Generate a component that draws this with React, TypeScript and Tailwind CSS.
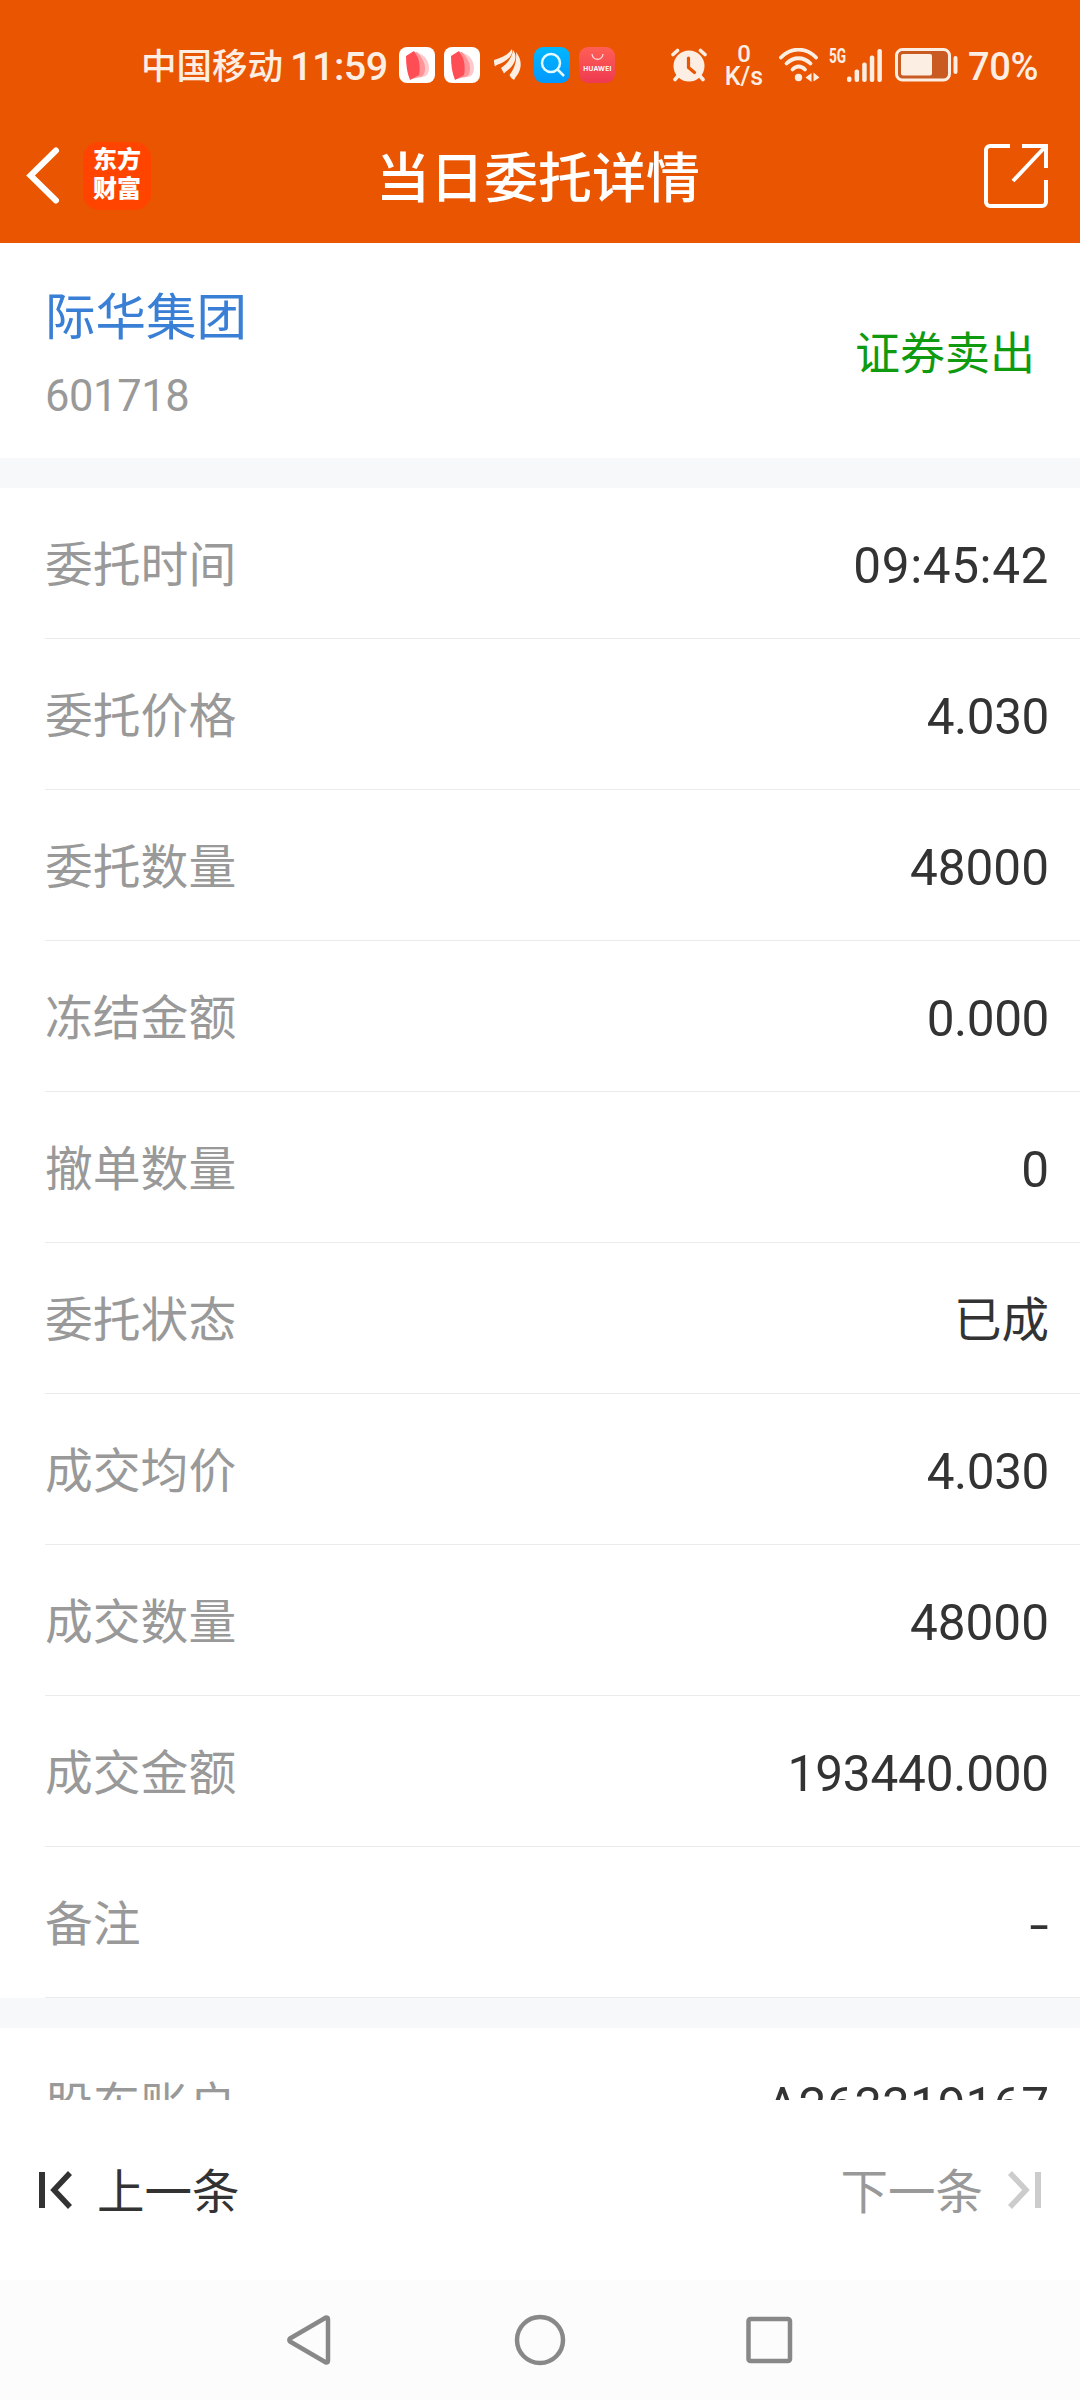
import React from 'react';

const rows = [
  { label: '委托时间', value: '09:45:42', valueClass: 'text-[49.500px] tracking-[.6px]' },
  { label: '委托价格', value: '4.030', valueClass: 'text-[49.500px] tracking-[-.4px]' },
  { label: '委托数量', value: '48000', valueClass: 'text-[49.500px]' },
  { label: '冻结金额', value: '0.000', valueClass: 'text-[49.500px] tracking-[-.4px]' },
  { label: '撤单数量', value: '0', valueClass: 'text-[49.500px]' },
  { label: '委托状态', value: '已成', valueClass: 'text-[47.500px]' },
  { label: '成交均价', value: '4.030', valueClass: 'text-[49.500px] tracking-[-.4px]' },
  { label: '成交数量', value: '48000', valueClass: 'text-[49.500px]' },
  { label: '成交金额', value: '193440.000', valueClass: 'text-[49.500px] tracking-[-.2px]' },
  { label: '备注', value: '-', valueClass: 'origin-right scale-x-140 text-[49.500px]' },
];

function ReaderIcon() {
  return (
    <svg width="36" height="36" viewBox="0 0 36 36">
      <rect width="36" height="36" rx="8" fill="#fff" />
      <path d="M14 6l5 0c7 2 11 8 11 15 0 6-3 9-7 9l-10 2z" fill="#ffc9cc" />
      <path d="M12 6l6-1c5 5 8 11 8 16 0 6-2 9-6 9l-8 2z" fill="#ff9499" />
      <path d="M7 9l8-5 4 7c2 6 2 13 1 17l-9 5c-3-7-4-15-4-24z" fill="#ff4d55" />
    </svg>
  );
}

function FeatherIcon() {
  return (
    <svg width="27" height="32" viewBox="0 0 27 32" fill="#fdeee4">
      <path d="M0 11C7 9 14 6 18 0c1 5-2 9-7 12-4 3-8 3-10 5.500C0 15 0 13 0 11z" />
      <path d="M7 19c6-4 11-10 12-18 4 5 3 11-1 16-3 4-6 5-8 7.500-1-2-2-3.500-3-5.500z" />
      <path d="M15.500 26C20 20 23 13 22 3c5 6 6 13 3 20-1 3-4 5-5 8-2-1-3.500-3-4.500-5z" />
    </svg>
  );
}

function SearchIcon() {
  return (
    <svg width="36" height="36" viewBox="0 0 36 36" fill="none">
      <defs>
        <linearGradient id="search" x1="0" y1="0" x2="0" y2="1">
          <stop stopColor="#00b7ff" />
          <stop offset="1" stopColor="#0098ff" />
        </linearGradient>
      </defs>
      <rect width="36" height="36" rx="9" fill="url(#search)" />
      <circle cx="17" cy="16" r="9" stroke="#e6fbff" strokeWidth="2.500" />
      <path d="M23 22l7 7" stroke="#e6fbff" strokeWidth="2.500" />
    </svg>
  );
}

function HuaweiIcon() {
  return (
    <svg width="36" height="36" viewBox="0 0 36 36" fill="none">
      <defs>
        <linearGradient id="huawei" x1="0" y1="0" x2="0" y2="1">
          <stop stopColor="#ff5f57" />
          <stop offset="1" stopColor="#ee3a50" />
        </linearGradient>
      </defs>
      <rect width="36" height="36" rx="9" fill="url(#huawei)" />
      <path d="M13 7c1 7 10 7 11 0" stroke="#ffd6d4" strokeWidth="1.300" />
      <text x="18.300" y="23.500" textAnchor="middle" textLength="28" fontSize="6.600" fontWeight="700" fill="#fff" fontFamily="Inter, sans-serif">HUAWEI</text>
    </svg>
  );
}

function AlarmIcon() {
  return (
    <svg width="36" height="34" viewBox="0 0 36 34" fill="none" stroke="#fdeee4" strokeLinecap="round">
      <circle cx="18" cy="18" r="15.500" fill="#fdeee4" stroke="none" />
      <path d="M2 6.500l4.500-4M34 6.500l-4.500-4" strokeWidth="3.600" />
      <path d="M7 28l-3 3.500M29 28l3 3.500" strokeWidth="3.600" />
      <path d="M17.500 10v9.500l6 5" stroke="#e95500" strokeWidth="3.200" strokeLinejoin="round" />
    </svg>
  );
}

function WifiIcon() {
  return (
    <svg width="41" height="34" viewBox="0 0 41 34" fill="none" stroke="#fdeee4" strokeWidth="3.800" strokeLinecap="round">
      <path d="M2 9.500C12-1 27-1 37 9.500" />
      <path d="M7.500 15.500c7-7 17-7 24 0" />
      <path d="M13.500 21.500c4-4 8.500-4 12.500 0" />
      <circle cx="19.500" cy="29.500" r="3.700" fill="#fdeee4" stroke="none" />
      <path d="M26.500 29.500l6-4.500v9zM40.500 29.500l-6-5v9z" fill="#fdeee4" stroke="none" />
    </svg>
  );
}

function SignalIcon() {
  return (
    <svg width="35" height="33" viewBox="0 0 35 33" fill="#fdeee4">
      <rect x="0" y="27.500" width="4.500" height="5.500" rx="2" />
      <rect x="7.600" y="20.500" width="4.500" height="12.500" rx="2" />
      <rect x="15.200" y="13.500" width="4.500" height="19.500" rx="2" />
      <rect x="22.800" y="6.500" width="4.500" height="26.500" rx="2" />
      <rect x="30.400" y="0" width="4.500" height="33" rx="2" />
    </svg>
  );
}

function BatteryIcon() {
  return (
    <svg width="64" height="34" viewBox="0 0 64 34" fill="none">
      <rect x="1.500" y="1.500" width="53" height="30.500" rx="6" fill="#c85a22" stroke="#fdeee4" strokeWidth="3" />
      <rect x="6" y="6" width="31" height="21.500" rx="2" fill="#fdeee4" />
      <rect x="58.500" y="8" width="4" height="18" rx="2" fill="#fdeee4" />
    </svg>
  );
}

function StatusBar() {
  return (
    <div className="flex h-[130px] items-center text-[#fdeee4] font-medium whitespace-nowrap">
      <span className="ml-[141px] w-[149px] pt-[6px] text-[35.500px]">中国移动</span>
      <span className="w-[109px] pt-[4px] text-[39.500px] tracking-[-.5px]">11:59</span>
      <div className="flex items-center">
        <ReaderIcon />
        <div className="ml-[9px]"><ReaderIcon /></div>
        <div className="ml-[14px]"><FeatherIcon /></div>
        <div className="ml-[13px]"><SearchIcon /></div>
        <div className="ml-[9px]"><HuaweiIcon /></div>
      </div>
      <div className="ml-[56px]"><AlarmIcon /></div>
      <div className="ml-[17px] flex w-[40px] flex-col items-center">
        <span className="text-[24px] leading-[23px]">0</span>
        <span className="text-[25px] leading-[22px]">K/s</span>
      </div>
      <div className="ml-[15px]"><WifiIcon /></div>
      <span className="ml-[9px] w-[18px] origin-left scale-x-[.65] self-start pt-[44px] text-[21px] leading-[24px] font-bold">5G</span>
      <SignalIcon />
      <div className="ml-[13px]"><BatteryIcon /></div>
      <span className="ml-[9px] pt-[5px] text-[38px] tracking-[-.4px]">70%</span>
    </div>
  );
}

function TitleBar() {
  return (
    <div className="flex h-[113px] items-start justify-between pt-[2px] pr-[31px] pl-[25px]">
      <div className="flex w-[160px] items-center pt-[10px]">
        <svg width="36" height="60" viewBox="0 0 36 60" fill="none" className="mb-[3px]">
          <path d="M31 5.500L5.500 30.500l25.500 25" stroke="#fff" strokeWidth="6" strokeLinecap="round" />
        </svg>
        <div className="ml-[22px] flex h-[68px] w-[68px] flex-col items-center justify-center rounded-[16px] bg-[#ff4400] pb-[2px] text-[24px] leading-[29px] font-black text-white">
          <span>东方</span>
          <span>财富</span>
        </div>
      </div>
      <h1 className="pt-[12px] pl-[2px] text-[54px] leading-[72px] font-medium text-white">当日委托详情</h1>
      <div className="flex w-[160px] justify-end pt-[11px]">
        <svg width="66" height="66" viewBox="0 0 66 66" fill="none" stroke="#fff" strokeWidth="4">
          <path d="M27 3H7a4 4 0 0 0-4 4v52a4 4 0 0 0 4 4h52a4 4 0 0 0 4-4V37" />
          <path d="M39 3h24v22" />
          <path d="M30 38L62 4" />
        </svg>
      </div>
    </div>
  );
}

function Row({ label, value, valueClass }: { label: string; value: string; valueClass: string }) {
  return (
    <div className="flex h-[151px] shrink-0 flex-col bg-white">
      <div className="flex flex-1 items-center justify-between pt-[7px] pr-[31px] pl-[45px]">
        <span className="text-[47.800px] text-[#999]">{label}</span>
        <span className={`text-[#333] ${valueClass}`}>{value}</span>
      </div>
      <div className="ml-[45px] h-px bg-[#ebebeb]" />
    </div>
  );
}

export default function App() {
  return (
    <div className="flex h-[2400px] w-[1080px] flex-col overflow-hidden bg-white font-[Roboto,'Noto_Sans_CJK_SC',sans-serif]">
      <header className="h-[243px] shrink-0 bg-[#e95500]">
        <StatusBar />
        <TitleBar />
      </header>

      <main className="flex h-[1857px] shrink-0 flex-col overflow-hidden bg-[#f6f8fa]">
        <section className="flex h-[215px] shrink-0 items-center justify-between bg-white pr-[45px] pl-[45px]">
          <div className="flex flex-col pt-[7px]">
            <span className="text-[50.500px] leading-[72px] text-[#3a7fd6]">际华集团</span>
            <span className="mt-[13px] text-[43.500px] leading-[60px] tracking-[-.4px] text-[#999]">601718</span>
          </div>
          <span className="pt-[8px] text-[45px] text-[#109a10]">证券卖出</span>
        </section>

        <section className="mt-[30px] shrink-0">
          {rows.map((r) => (
            <Row key={r.label} {...r} />
          ))}
        </section>

        <section className="mt-[30px] shrink-0">
          <Row label="股东账户" value="A263319167" valueClass="text-[49.500px]" />
        </section>
      </main>

      <footer className="flex h-[180px] shrink-0 items-center justify-between bg-white pr-[39px] pl-[39px] text-[47.500px]">
        <button className="flex items-center text-[#333]">
          <svg width="34" height="38" viewBox="0 0 34 38" fill="none" stroke="#333">
            <path d="M3 1v36" strokeWidth="6" />
            <path d="M31 2L15 19l16 17" strokeWidth="5.500" />
          </svg>
          <span className="ml-[24px] pt-[7px]">上一条</span>
        </button>
        <button className="flex items-center text-[#999]">
          <span className="mr-[24px] pt-[7px]">下一条</span>
          <svg width="34" height="38" viewBox="0 0 34 38" fill="none" stroke="#ccc">
            <path d="M31 1v36" strokeWidth="6" />
            <path d="M3 2l16 17L3 36" strokeWidth="5.500" />
          </svg>
        </button>
      </footer>

      <nav className="flex h-[120px] shrink-0 items-center justify-center bg-[#fcfcfc]">
        <svg width="506" height="52" viewBox="0 0 506 52" fill="none" stroke="#888" strokeWidth="4.500" strokeLinejoin="round">
          <path d="M39 3.500L3 24.500a2 2 0 0 0 0 3l36 21q2 0 2-2v-41q0-2-2-2z" />
          <circle cx="253" cy="26" r="23" />
          <rect x="461.500" y="5" width="41.500" height="42" rx="2" />
        </svg>
      </nav>
    </div>
  );
}
